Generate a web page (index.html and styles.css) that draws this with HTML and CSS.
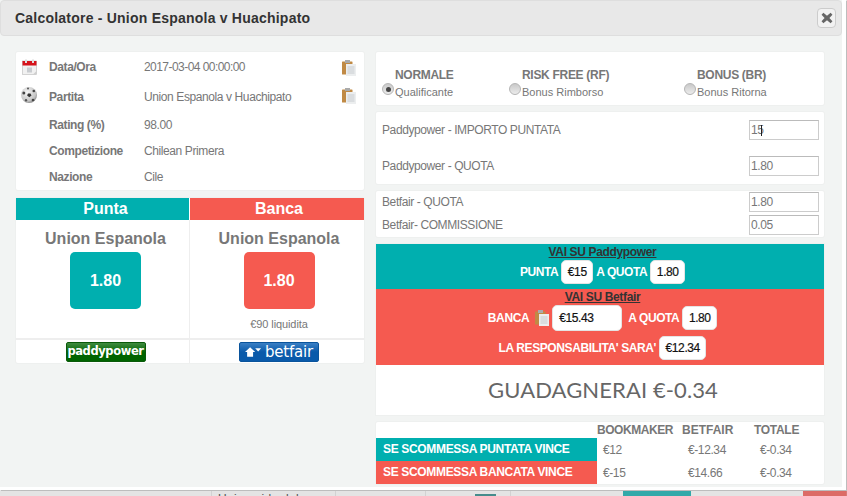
FILE: index.html
```html
<!DOCTYPE html>
<html lang="it">
<head>
<meta charset="utf-8">
<title>Calcolatore</title>
<link rel="stylesheet" href="styles.css">
</head>
<body>
<div class="page">
  <div class="strip">
    <div class="strip-cell c1"></div>
    <div class="strip-cell c2">Union aida dal</div>
    <div class="strip-cell c3"></div>
    <div class="strip-cell c4"><span class="strip-chip"></span></div>
    <div class="strip-cell c5"></div>
    <div class="strip-cell c6 teal-dim"></div>
    <div class="strip-cell c7"></div>
    <div class="strip-cell c8 red-dim"></div>
  </div>
  <div class="edge"></div>
</div>

<div class="modal">
  <header class="modal-head">
    <h1 class="modal-title">Calcolatore - Union Espanola v Huachipato</h1>
    <button class="close" type="button" aria-label="Chiudi">
      <svg width="12" height="12" viewBox="0 0 11 11"><path d="M2.200 .8 5.500 3.400 8.800 .8 10.500 2.500 7.700 5.500 10.500 8.500 8.800 10.200 5.500 7.600 2.200 10.200 .5 8.500 3.300 5.500.5 2.500z" fill="#666"/></svg>
    </button>
  </header>
  <div class="modal-body">
    <div class="col-left">
      <section class="card info">
        <div class="info-row r1">
          <svg class="ico" width="15" height="16" viewBox="0 0 15 16"><rect x="0.500" y="2" width="14" height="13.500" fill="#f1f1f1" stroke="#bbb" stroke-width=".6"/><rect x="0.500" y="2" width="14" height="4.500" fill="#d5141c"/><rect x="3" y="0.500" width="2" height="3.500" fill="#ddd"/><rect x="10" y="0.500" width="2" height="3.500" fill="#ddd"/><rect x="5" y="8.500" width="5" height="5" fill="#c9ccd0"/><path d="M11 15.500 14.500 12v3.500z" fill="#cfcfcf"/></svg>
          <span class="lbl">Data/Ora</span><span class="val date">2017-03-04 00:00:00</span>
          <svg class="clip" width="14" height="16" viewBox="0 0 14 16"><use href="#clipboard"/></svg>
        </div>
        <div class="info-row r2">
          <svg class="ico ball" width="16" height="16" viewBox="0 0 16 16"><defs><radialGradient id="b" cx=".4" cy=".35" r=".75"><stop offset="0" stop-color="#f6f6f6"/><stop offset=".7" stop-color="#c4c4c4"/><stop offset="1" stop-color="#666"/></radialGradient></defs><circle cx="8" cy="8" r="8" fill="url(#b)"/><path d="M7 6.500l2.500 0 1 2-2.200 1.800-2.200-1.800z" fill="#333"/><circle cx="2.800" cy="6" r="1.500" fill="#444"/><circle cx="12.800" cy="4" r="1.300" fill="#444"/><circle cx="5" cy="13.300" r="1.200" fill="#555"/><circle cx="12" cy="13" r="1.300" fill="#444"/><circle cx="7" cy="1.500" r="1" fill="#555"/></svg>
          <span class="lbl">Partita</span><span class="val">Union Espanola v Huachipato</span>
          <svg class="clip" width="14" height="16" viewBox="0 0 14 16"><use href="#clipboard"/></svg>
        </div>
        <div class="info-row r3"><span class="lbl">Rating (%)</span><span class="val">98.00</span></div>
        <div class="info-row r4"><span class="lbl">Competizione</span><span class="val">Chilean Primera</span></div>
        <div class="info-row r5"><span class="lbl">Nazione</span><span class="val">Cile</span></div>
      </section>

      <section class="card bets">
        <div class="bet-head teal col-a">Punta</div>
        <div class="bet-head red col-b">Banca</div>
        <div class="bet-main col-a">
          <div class="team">Union Espanola</div>
          <div class="odd teal">1.80</div>
        </div>
        <div class="bet-main divided col-b">
          <div class="team">Union Espanola</div>
          <div class="odd red">1.80</div>
          <div class="liq">€90 liquidita</div>
        </div>
        <div class="bet-logo col-a"><span class="logo paddy">paddypower</span></div>
        <div class="bet-logo divided col-b">
          <span class="logo betfair">
            <svg width="17" height="10" viewBox="0 0 20 11"><path d="M0 5.500 6 0l6 5.500H9.500V11h-7V5.500z" fill="#fff"/><path d="M12 1h7l-3.500 4z" fill="#fff"/></svg><span class="bf-word">betfair</span>
          </span>
        </div>
      </section>
    </div>

    <div class="col-right">
      <section class="card modes">
        <div class="mode m1"><b>NORMALE</b><span class="mode-sub"><i class="radio on"></i>Qualificante</span></div>
        <div class="mode m2"><b>RISK FREE (RF)</b><span class="mode-sub"><i class="radio"></i>Bonus Rimborso</span></div>
        <div class="mode m3"><b>BONUS (BR)</b><span class="mode-sub"><i class="radio"></i>Bonus Ritorna</span></div>
      </section>

      <section class="card fields wide">
        <label class="field-row"><span>Paddypower - IMPORTO PUNTATA</span><span class="num-wrap"><input class="num" value="15"><i class="caret"></i></span></label>
        <label class="field-row"><span>Paddypower - QUOTA</span><input class="num" value="1.80"></label>
      </section>

      <section class="card fields tight">
        <label class="field-row"><span>Betfair - QUOTA</span><input class="num" value="1.80"></label>
        <label class="field-row"><span>Betfair- COMMISSIONE</span><input class="num" value="0.05"></label>
      </section>

      <section class="result">
        <div class="go teal go-a">
          <div class="go-title">VAI SU Paddypower</div>
          <div class="go-line"><span>PUNTA</span><span class="pill">€15</span><span>A QUOTA</span><span class="pill">1.80</span></div>
        </div>
        <div class="go red go-b">
          <div class="go-title">VAI SU Betfair</div>
          <div class="go-line line-b">
            <span>BANCA</span>
            <svg class="clip-sm" width="14" height="16" viewBox="0 0 14 16"><use href="#clipboard"/></svg>
            <span class="pill stake">€15.43</span><span class="after-stake">A QUOTA</span><span class="pill">1.80</span>
          </div>
          <div class="go-line line-c"><span>LA RESPONSABILITA' SARA'</span><span class="pill">€12.34</span></div>
        </div>
        <div class="gain">GUADAGNERAI €-0.34</div>
      </section>

      <section class="card summary">
        <div class="sum-row sum-head"><span></span><span class="h-book">BOOKMAKER</span><span>BETFAIR</span><span class="h-tot">TOTALE</span></div>
        <div class="sum-row"><span class="sum-name teal">SE SCOMMESSA PUNTATA VINCE</span><span class="sum-v">€12</span><span class="sum-v">€-12.34</span><span class="sum-v">€-0.34</span></div>
        <div class="sum-row"><span class="sum-name red">SE SCOMMESSA BANCATA VINCE</span><span class="sum-v">€-15</span><span class="sum-v">€14.66</span><span class="sum-v">€-0.34</span></div>
      </section>
    </div>
  </div>
</div>

<svg class="defs" width="0" height="0">
  <symbol id="clipboard" viewBox="0 0 14 16">
    <rect x="0" y="1.500" width="10.500" height="13" rx=".6" fill="#c08a45"/>
    <rect x="3" y="0" width="5" height="3" fill="#aaa"/>
    <rect x="4" y="4" width="10" height="12" fill="#eceeef"/>
    <path d="M5.500 7h7M5.500 9h7M5.500 11h7M5.500 13h7" stroke="#c8ccd0" stroke-width="1"/>
  </symbol>
</svg>
</body>
</html>
```
FILE: styles.css
```css
* { box-sizing: border-box; }
html, body { margin: 0; height: 496px; overflow: hidden; }
body { font-family: "Liberation Sans", Arial, sans-serif; font-size: 12px; letter-spacing: -.4px; color: #777; background: #e4e4e4; position: relative; }

.page { height: 496px; display: flex; flex-direction: column; justify-content: flex-end; position: relative; }
.strip { height: 7px; display: flex; overflow: hidden; }
.strip-cell { border-right: 1px solid #d2d2d2; padding: 4px 0 0 6px; color: #555; white-space: nowrap; overflow: hidden; line-height: 12px; font-size: 12px; letter-spacing: .3px; }
.c1 { width: 212px; }
.c2 { width: 124px; }
.c3 { width: 90px; }
.c4 { width: 85px; padding-left: 0; position: relative; }
.strip-chip { position: absolute; left: 49px; top: 5px; width: 21px; height: 3px; background: #468c8c; }
.c5 { width: 112px; border: 0; }
.c6 { width: 68px; border: 0; }
.c7 { width: 112px; border: 0; }
.c8 { width: 44px; border: 0; }
.teal-dim { background: #32a9a9; }
.red-dim { background: #dc6b66; }
.edge { position: absolute; right: 0; top: 75px; bottom: 0; width: 1px; background: #d77c78; }

.modal { position: absolute; left: 0; top: 0; width: 846px; height: 490px; background: #f2f4f3; border-right: 4px solid #fff; border-bottom: 3px solid #fff; box-shadow: 1px 1px 0 #bdbdbd; }
.modal-head { height: 36px; background: #e8e8e8; border: 1px solid #dedede; border-radius: 4px; display: flex; align-items: center; justify-content: space-between; padding: 0 5px 0 14px; }
.modal-title { margin: 0; font-size: 14px; font-weight: 700; color: #333; letter-spacing: .22px; }
.close { width: 19px; height: 20px; padding: 0; background: #f2f2f2; border: 1px solid #ccc; border-radius: 4px; display: flex; align-items: center; justify-content: center; }

.modal-body { display: flex; gap: 12px; padding: 16px 0 0 16px; align-items: flex-start; }
.col-left { width: 348px; display: flex; flex-direction: column; gap: 8px; }
.col-right { width: 448px; display: flex; flex-direction: column; gap: 7px; }
.card { background: #fff; border-radius: 2px; box-shadow: 0 0 0 1px #eef0ef; }

.info { height: 138px; padding-top: 1px; }
.info-row { display: flex; align-items: center; position: relative; padding-left: 33px; }
.r1 { height: 28px; }
.r2 { height: 31px; }
.r3 { height: 26px; }
.r4 { height: 26px; }
.r5 { height: 25px; }
.lbl { width: 95px; font-weight: 700; }
.val { flex: 1; }
.val.date { letter-spacing: -.55px; }
.ico { position: absolute; left: 6px; top: 6px; }
.ico.ball { left: 5px; }
.clip { position: absolute; left: 326px; top: 7px; }

.bets { display: grid; grid-template-columns: 173px 175px; grid-template-rows: 22px 120px 23px; }
.col-a { padding-left: 6px; }
.col-b { padding-left: 4px; }
.teal { background: #00afaf; }
.red { background: #f55a50; }
.bet-head { color: #fff; font-size: 16px; font-weight: 700; text-align: center; line-height: 21px; letter-spacing: 0; }
.bet-head.red { margin-left: 1px; }
.bet-main { display: flex; flex-direction: column; align-items: center; padding-top: 10px; border-bottom: 2px solid #eee; }
.divided { border-left: 1px solid #eee; }
.team { font-size: 16px; font-weight: 700; line-height: 18px; letter-spacing: 0; }
.odd { width: 71px; height: 57px; margin-top: 4px; border-radius: 5px; color: #fff; font-size: 16px; font-weight: 700; letter-spacing: 0; display: flex; align-items: center; justify-content: center; }
.liq { margin-top: 8px; font-size: 11px; line-height: 14px; letter-spacing: -.1px; }
.bet-logo { display: flex; justify-content: center; padding-top: 2px; }
.logo { width: 80px; height: 20px; border-radius: 2px; color: #fff; display: flex; align-items: center; justify-content: center; white-space: nowrap; }
.paddy { background: linear-gradient(#3f8a3f, #006400 55%); border: 1px solid #0a5a0a; font: 700 11.5px "DejaVu Sans", sans-serif; letter-spacing: -.4px; padding-bottom: 3px; }
.betfair { background: linear-gradient(#3a7fc4, #0a5aaa 50%); border: 1px solid #0a549c; gap: 3px; padding-bottom: 1px; }
.bf-word { font: 400 15px "DejaVu Sans", sans-serif; letter-spacing: -.2px; line-height: 16px; }

.modes { height: 53px; position: relative; }
.mode { position: absolute; top: 17px; display: flex; flex-direction: column; letter-spacing: 0; }
.mode b { line-height: 13px; letter-spacing: -.3px; }
.mode-sub { font-size: 11px; line-height: 13px; position: relative; margin-top: 4px; }
.m1 { left: 19px; }
.m2 { left: 146px; }
.m3 { left: 321px; }
.radio { position: absolute; left: -13px; top: -3px; width: 12px; height: 12px; border-radius: 50%; background: linear-gradient(#c9c9c9, #ececec); border: 1px solid #b5b5b5; }
.radio.on::after { content: ""; position: absolute; left: 2.500px; top: 2.500px; width: 5px; height: 5px; border-radius: 50%; background: #444; }

.fields { padding: 0 5px 0 6px; display: flex; flex-direction: column; }
.wide { height: 72px; padding-top: 8px; gap: 16px; }
.tight { height: 46px; padding-top: 1px; gap: 3px; }
.field-row { display: flex; align-items: center; justify-content: space-between; font-size: 12px; color: #777; }
.num-wrap { position: relative; display: flex; }
.caret { position: absolute; left: 12px; top: 5px; width: 1px; height: 11px; background: #222; }
.num { width: 70px; height: 20px; border: 1px solid #ccc; border-top-color: #bbb; border-radius: 0; padding: 0 1px; font: 12px "Liberation Sans", sans-serif; letter-spacing: -.4px; color: #777; background: #fff; outline: none; }

.result { display: flex; flex-direction: column; box-shadow: 0 0 0 1px #eef0ef; }
.go { color: #fff; font-weight: 700; text-align: center; padding-left: 5px; }
.go-a { height: 45px; padding-top: 2px; }
.go-b { height: 76px; padding-top: 2px; }
.go-title { color: #333; font-weight: 700; text-decoration: underline; line-height: 12px; letter-spacing: -.35px; }
.go-line { display: flex; align-items: center; justify-content: center; gap: 3px; margin-top: 2px; }
.pill { background: #fff; color: #111; border: 1px solid #e4e4e4; border-radius: 5px; height: 24px; line-height: 22px; padding: 0 5.5px; font-weight: 400; -webkit-text-stroke: .2px #111; }
.line-b { gap: 3px; }
.clip-sm { margin: 0 0 0 3px; }
.stake { width: 70px; height: 26px; line-height: 24px; text-align: left; padding-left: 6px; }
.after-stake { margin-left: 3px; }
.line-c { margin-top: 5px; }
.gain { height: 50px; background: #fff; color: #666; font: 400 22px/50px "Lato", sans-serif; text-align: center; letter-spacing: .1px; padding-left: 6px; }

.summary { height: 62px; }
.sum-row { display: grid; grid-template-columns: 221px 85px 72px 70px; align-items: center; height: 23px; }
.sum-head { height: 16px; font-weight: 700; letter-spacing: 0; }
.h-book { letter-spacing: -.45px; }
.h-tot { letter-spacing: -.3px; }
.sum-name { color: #fff; font-weight: 700; height: 23px; line-height: 23px; padding-left: 7px; white-space: nowrap; letter-spacing: -.33px; }
.sum-v { padding-left: 6px; }
.defs { position: absolute; }
```
